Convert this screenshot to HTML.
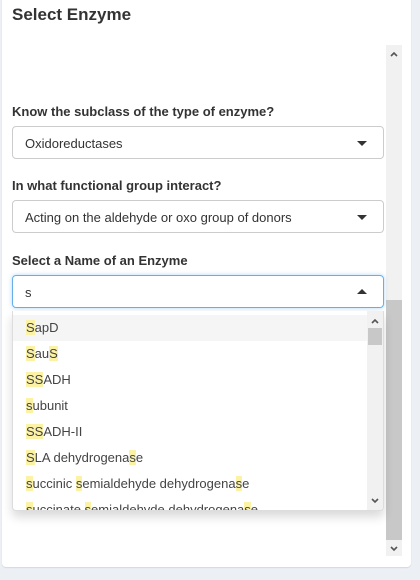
<!DOCTYPE html>
<html><head><style>
*{box-sizing:border-box;margin:0;padding:0}
body{width:420px;height:580px;background:#ecf0f5;font-family:"Liberation Sans",sans-serif;color:#333;position:relative;overflow:hidden}
.card{position:absolute;left:2px;top:-5px;width:409px;height:572px;background:#fff;border-radius:4px;box-shadow:0 1px 1px rgba(0,0,0,.1)}
h3{position:absolute;left:12px;top:5px;font-size:17px;font-weight:bold;color:#333}
.lab{position:absolute;left:12px;font-size:13px;font-weight:bold;color:#333}
.sel{position:absolute;left:12px;width:372px;height:33px;border:1px solid #ccc;border-radius:4px;font-size:13px;padding:9px 12px;color:#333}
.sel .ar{position:absolute;right:16px;top:14px;width:0;height:0;border-left:5px solid transparent;border-right:5px solid transparent;border-top:5px solid #333}
.sel .up{position:absolute;right:16px;top:13px;width:0;height:0;border-left:5px solid transparent;border-right:5px solid transparent;border-bottom:5px solid #333}
.osb{position:absolute;left:386px;top:45px;width:16px;height:511px;background:#f1f1f1}
.othumb{position:absolute;left:386px;top:300px;width:16px;height:240px;background:#c8c8c8}
.dd{position:absolute;left:12px;top:311px;width:372px;height:200px;background:#fff;border:1px solid #ddd;border-top:none;border-radius:0 0 4px 4px;box-shadow:0 6px 10px rgba(0,0,0,.15);overflow:hidden}
.it{height:26px;line-height:26px;padding-left:13px;font-size:13px;color:#444;white-space:nowrap}
.it.h{background:#f5f5f5}
.it b{font-weight:normal;background:#fbf2a6}
.isb{position:absolute;right:0;top:0;width:16px;height:200px;background:#f1f1f1}
.ith{position:absolute;right:1px;top:17px;width:14px;height:17px;background:#c8c8c8}
svg.c{position:absolute;width:8px;height:6px}
</style></head><body>
<div class="card"></div>
<h3>Select Enzyme</h3>
<div class="osb"></div><div class="othumb"></div>
<svg class="c" style="left:390px;top:51px" viewBox="0 0 8 6"><path d="M1 5L4 2L7 5" stroke="#555" stroke-width="1.6" fill="none"/></svg>
<svg class="c" style="left:390px;top:546px" viewBox="0 0 8 6"><path d="M1 1L4 4L7 1" stroke="#555" stroke-width="1.6" fill="none"/></svg>
<div class="lab" style="top:104px">Know the subclass of the type of enzyme?</div>
<div class="sel" style="top:126px">Oxidoreductases<span class="ar"></span></div>
<div class="lab" style="top:178px">In what functional group interact?</div>
<div class="sel" style="top:200px">Acting on the aldehyde or oxo group of donors<span class="ar"></span></div>
<div class="lab" style="top:253px">Select a Name of an Enzyme</div>
<div class="sel" style="top:275px;border-color:#66afe9;box-shadow:0 0 4px rgba(102,175,233,.5)">s<span class="up"></span></div>
<div class="dd">
<div class="it h" style="margin-top:4px"><b>S</b>apD</div>
<div class="it"><b>S</b>au<b>S</b></div>
<div class="it"><b>SS</b>ADH</div>
<div class="it"><b>s</b>ubunit</div>
<div class="it"><b>SS</b>ADH-II</div>
<div class="it"><b>S</b>LA dehydrogena<b>s</b>e</div>
<div class="it"><b>s</b>uccinic <b>s</b>emialdehyde dehydrogena<b>s</b>e</div>
<div class="it"><b>s</b>uccinate <b>s</b>emialdehyde dehydrogena<b>s</b>e</div>
<div class="isb"></div><div class="ith"></div>
<svg class="c" style="right:4px;top:7px" viewBox="0 0 8 6"><path d="M1 5L4 2L7 5" stroke="#555" stroke-width="1.6" fill="none"/></svg>
<svg class="c" style="right:4px;top:187px" viewBox="0 0 8 6"><path d="M1 1L4 4L7 1" stroke="#555" stroke-width="1.6" fill="none"/></svg>
</div>
</body></html>
